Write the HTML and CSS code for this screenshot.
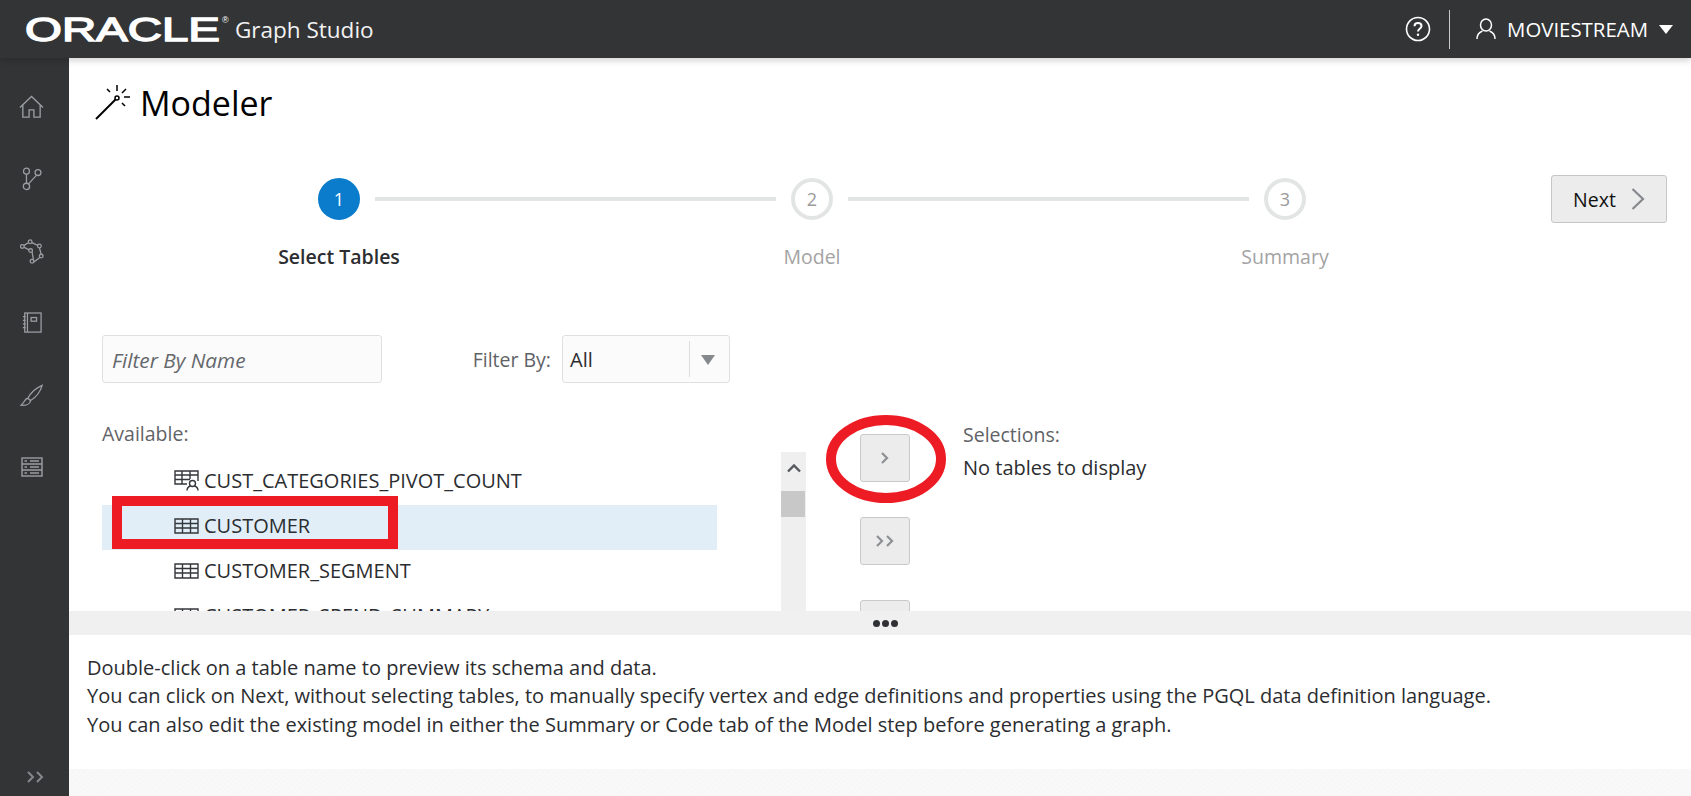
FILE: index.html
```html
<!DOCTYPE html>
<html lang="en">
<head>
  <meta charset="UTF-8" />
  <title>Graph Studio - Modeler</title>
  <link rel="stylesheet" href="styles.css">
</head>
<body>
  <header class="topbar">
    <div class="brand">
      <svg class="oracle-logo" width="206" height="40" viewBox="0 0 206 40">
        <text x="0" y="32" textLength="195" lengthAdjust="spacingAndGlyphs">ORACLE</text>
        <text class="reg" x="197" y="14">®</text>
      </svg>
      <span class="product">Graph Studio</span>
    </div>
    <div class="topbar-right">
      <svg class="help" width="26" height="26" viewBox="0 0 26 26" fill="none" stroke="#fff" stroke-width="1.6">
        <circle cx="13" cy="13" r="11.5"/>
        <path d="M9.5 10.2c0-2 1.6-3.2 3.5-3.2s3.5 1.2 3.5 3c0 2.700-3.500 2.800-3.500 5.400" stroke-width="2"/>
        <circle cx="13" cy="18.800" r="1.200" fill="#fff" stroke="none"/>
      </svg>
      <span class="divider"></span>
      <svg class="user" width="20" height="22" viewBox="0 0 20 22" fill="none" stroke="#fff" stroke-width="1.500">
        <ellipse cx="10" cy="7" rx="5.500" ry="6"/>
        <path d="M1 21c0-4.500 3-7 5.500-8M19 21c0-4.500-3-7-5.500-8"/>
      </svg>
      <span class="username">MOVIESTREAM</span>
      <span class="caret"></span>
    </div>
  </header>

  <div class="shell">
    <nav class="sidebar">
      <div class="nav-items">
        <svg width="25" height="24" viewBox="0 0 26 24" fill="none" stroke="#9a9ea3" stroke-width="1.400">
          <path d="M1 12.500 13 1l12 11.500M4 10v12.500h6.500V15h5v7.500H22V10"/>
        </svg>
        <svg width="24" height="24" viewBox="0 0 26 26" fill="none" stroke="#9a9ea3" stroke-width="1.400">
          <circle cx="7" cy="4.500" r="3.200"/><circle cx="19.500" cy="6" r="3.200"/><circle cx="7" cy="21" r="3.400"/>
          <path d="M7 7.700v9.900M9 18.500 18 8.800"/>
        </svg>
        <svg width="24" height="25" viewBox="0 0 26 26" fill="none" stroke="#9a9ea3" stroke-width="1.400">
          <path d="M2.500 7.500 11 2.500l9.500 4.500 3 11-8.500 6.500-2-11.500z"/>
          <g fill="#323436"><circle cx="2.500" cy="7.500" r="2"/><circle cx="11" cy="2.500" r="2"/><circle cx="21" cy="7" r="2"/><circle cx="23" cy="18" r="2"/><circle cx="13" cy="23.500" r="2"/><circle cx="11.500" cy="12" r="2"/></g>
        </svg>
        <svg width="20" height="22" viewBox="0 0 22 24" fill="none" stroke="#9a9ea3" stroke-width="1.400">
          <rect x="3" y="1" width="18" height="21"/>
          <rect x="10" y="6" width="6" height="4"/>
          <path d="M6 1v21M1 5h3M1 9h3M1 13h3M1 17h3"/>
        </svg>
        <svg width="24" height="23" viewBox="0 0 26 24" fill="none" stroke="#9a9ea3" stroke-width="1.400">
          <path d="M24 1C17 4 11 10 8.500 15l3 2.500C17 14 22 8 24 1zM8.500 15C5 15 5 20 1 22.500c5 .5 10-1 10.500-5"/>
        </svg>
        <svg width="22" height="20" viewBox="0 0 22 20" fill="none" stroke="#9a9ea3" stroke-width="1.400">
          <rect x="1" y="1" width="20" height="18"/>
          <path d="M1 7h20M1 13h20M9 4h9M9 10h9M9 16h9M3.500 4h2.500M3.500 10h2.500M3.500 16h2.500"/>
        </svg>
      </div>
      <svg class="expand" width="20" height="12" viewBox="0 0 20 12" fill="none" stroke="#85888c" stroke-width="2">
        <path d="M2 1l5 5-5 5M11 1l5 5-5 5"/>
      </svg>
    </nav>

    <main class="main">
      <section class="work">
        <div class="page-title">
          <svg width="36" height="36" viewBox="0 0 36 36" fill="none" stroke="#000" stroke-width="1.500">
            <path d="M1 35 20.500 15.500" stroke-width="2"/>
            <circle cx="22" cy="14" r="2"/>
            <path d="M22 7V1M15 8l-3-3M27 9l4-4M29 13h6M27 19l3 3"/>
          </svg>
          <h1>Modeler</h1>
        </div>

        <div class="wizard">
          <div class="step active">
            <span class="step-num">1</span>
            <span class="step-label">Select Tables</span>
          </div>
          <span class="step-line"></span>
          <div class="step">
            <span class="step-num">2</span>
            <span class="step-label">Model</span>
          </div>
          <span class="step-line"></span>
          <div class="step">
            <span class="step-num">3</span>
            <span class="step-label">Summary</span>
          </div>
          <button class="next-btn">Next
            <svg width="14" height="24" viewBox="0 0 14 24" fill="none" stroke="#85888c" stroke-width="2.200"><path d="M1.500 2 12 12 1.500 22"/></svg>
          </button>
        </div>

        <div class="filters">
          <div class="filter-input">Filter By Name</div>
          <label class="filter-label">Filter By:</label>
          <div class="filter-select">
            <span class="select-value">All</span>
            <span class="select-arrow"></span>
          </div>
        </div>

        <div class="shuttle">
          <div class="available">
            <div class="list-label">Available:</div>
            <div class="list-area">
              <ul class="table-list">
                <li>
                  <svg width="25" height="21" viewBox="0 0 25 21" fill="none" stroke="#33363a" stroke-width="1.400">
                    <path d="M13 14H1V1h23v10M1 5h23M1 9.500h15M8 1v13M16 1v8"/>
                    <circle cx="18.500" cy="13.500" r="3"/><path d="M13 20.500c0-3 2-4 3.500-4.500M24 20.500c0-3-2-4-3.500-4.500"/>
                  </svg>
                  CUST_CATEGORIES_PIVOT_COUNT
                </li>
                <li class="selected">
                  <svg width="25" height="16" viewBox="0 0 25 16" fill="none" stroke="#33363a" stroke-width="1.400">
                    <path d="M1 1h23v14H1zM1 5.500h23M1 10h23M8.500 1v14M16.500 1v14"/>
                  </svg>
                  CUSTOMER
                </li>
                <li>
                  <svg width="25" height="16" viewBox="0 0 25 16" fill="none" stroke="#33363a" stroke-width="1.400">
                    <path d="M1 1h23v14H1zM1 5.500h23M1 10h23M8.500 1v14M16.500 1v14"/>
                  </svg>
                  CUSTOMER_SEGMENT
                </li>
                <li>
                  <svg width="25" height="16" viewBox="0 0 25 16" fill="none" stroke="#33363a" stroke-width="1.400">
                    <path d="M1 1h23v14H1zM1 5.500h23M1 10h23M8.500 1v14M16.500 1v14"/>
                  </svg>
                  CUSTOMER_SPEND_SUMMARY
                </li>
              </ul>
              <div class="scrollbar">
                <svg width="16" height="10" viewBox="0 0 16 10" fill="none" stroke="#55585c" stroke-width="2.400"><path d="M2 8.500 8 2.500l6 6"/></svg>
                <span class="thumb"></span>
              </div>
            </div>
          </div>

          <div class="move-btns">
            <button class="move-btn"><svg width="10" height="14" viewBox="0 0 10 14" fill="none" stroke="#8d9094" stroke-width="2.200"><path d="M2 2l5 5-5 5"/></svg></button>
            <button class="move-btn"><svg width="20" height="14" viewBox="0 0 20 14" fill="none" stroke="#8d9094" stroke-width="2.200"><path d="M2 2l5 5-5 5M12 2l5 5-5 5"/></svg></button>
            <button class="move-btn"></button>
          </div>

          <div class="selections">
            <div class="list-label">Selections:</div>
            <div class="empty">No tables to display</div>
          </div>
        </div>

        <span class="mark-rect"></span>
        <svg class="mark-oval" width="120" height="88" viewBox="0 0 120 88" fill="none" stroke="#ed1c24" stroke-width="10">
          <ellipse cx="60" cy="44" rx="55" ry="39"/>
        </svg>
      </section>

      <div class="splitter"><span></span><span></span><span></span></div>

      <section class="info">
        <p>Double-click on a table name to preview its schema and data.</p>
        <p>You can click on Next, without selecting tables, to manually specify vertex and edge definitions and properties using the PGQL data definition language.</p>
        <p>You can also edit the existing model in either the Summary or Code tab of the Model step before generating a graph.</p>
      </section>

      <div class="page-foot"></div>
    </main>
  </div>
</body>
</html>
```
FILE: styles.css
```css
* {
  box-sizing: border-box;
}
html, body {
  height: 100%;
}
body {
  margin: 0;
  font-family: "Open Sans", "Noto Sans", sans-serif;
  font-size: 20px;
  color: #2b2d30;
  background: #fff;
  overflow: hidden;
}
.topbar {
  height: 58px;
  background: #323436;
  color: #fff;
  display: flex;
  align-items: center;
  justify-content: space-between;
  padding: 0 18px 0 25px;
  position: relative;
  z-index: 2;
  box-shadow: 0 3px 6px rgba(0,0,0,0.16);
}
.brand {
  display: flex;
  align-items: center;
  gap: 4px;
}
.oracle-logo text {
  fill: #fff;
  stroke: #fff;
  stroke-width: 1.4px;
  font-family: "Liberation Sans", sans-serif;
  font-size: 33px;
}
.oracle-logo .reg {
  font-size: 9px;
  stroke: none;
}
.product {
  font-size: 22.5px;
  color: #f2f2f2;
}
.topbar-right {
  display: flex;
  align-items: center;
}
.divider {
  width: 1px;
  height: 39px;
  background: #c9c9c9;
  margin: 0 26px 0 18px;
}
.username {
  margin-left: 11px;
  font-size: 20.4px;
}
.caret {
  margin-left: 11px;
  border-left: 7px solid transparent;
  border-right: 7px solid transparent;
  border-top: 9px solid #fff;
}
.shell {
  display: flex;
  height: 738px;
}
.sidebar {
  width: 69px;
  flex: none;
  background: #323436;
  display: flex;
  flex-direction: column;
  justify-content: space-between;
  padding: 13px 6px 13px 0;
}
.nav-items {
  display: grid;
  grid-auto-rows: 72px;
  justify-items: center;
  align-items: center;
}
.expand {
  margin-left: 26px;
}
.main {
  flex: 1;
  display: flex;
  flex-direction: column;
}
.work {
  height: 553px;
  overflow: hidden;
  position: relative;
  padding: 24px 24px 0 33px;
}
.page-title {
  display: flex;
  align-items: center;
  gap: 3px;
  margin-left: -7px;
}
.page-title svg {
  margin-top: -2px;
}
h1 {
  margin: 0 0 0 6px;
  font-size: 34px;
  font-weight: normal;
  line-height: 42px;
  color: #000;
}
.wizard {
  display: flex;
  align-items: flex-start;
  margin-top: 54px;
  padding-left: 216px;
}
.step {
  width: 42px;
  display: flex;
  flex-direction: column;
  align-items: center;
}
.step-num {
  width: 42px;
  height: 42px;
  flex: none;
  border-radius: 50%;
  border: 4px solid #e3e5e5;
  display: flex;
  align-items: center;
  justify-content: center;
  color: #9a9a9a;
  font-size: 18px;
}
.step.active .step-num {
  background: #0a7ccb;
  border-color: #0a7ccb;
  color: #fff;
}
.step-label {
  margin-top: 24px;
  line-height: 26px;
  font-size: 19.5px;
  white-space: nowrap;
  color: #a3a3a3;
}
.step.active .step-label {
  color: #2b2d30;
  font-weight: 600;
}
.step-line {
  width: 401px;
  height: 4px;
  margin: 19px 15px 0;
  background: #e3e5e5;
}
.next-btn {
  margin-left: auto;
  margin-top: -3px;
  width: 116px;
  height: 48px;
  background: #ececec;
  border: 1px solid #c6c6c6;
  border-radius: 3px;
  font: inherit;
  font-size: 19.5px;
  color: #111;
  display: flex;
  align-items: center;
  justify-content: center;
  gap: 15px;
}
.filters {
  display: flex;
  align-items: center;
  margin-top: 65px;
}
.filter-input {
  width: 280px;
  height: 48px;
  background: #fbfbfb;
  border: 1px solid #e0e0e0;
  border-radius: 3px;
  padding: 1px 9px 0;
  line-height: 46px;
  font-size: 20.8px;
  font-style: italic;
  color: #65686c;
}
.filter-label {
  width: 169px;
  text-align: right;
  font-size: 19.5px;
  color: #5f6266;
}
.filter-select {
  width: 168px;
  height: 48px;
  margin-left: 11px;
  background: #fbfbfb;
  border: 1px solid #e0e0e0;
  border-radius: 3px;
  display: flex;
  align-items: center;
  justify-content: space-between;
  padding-left: 7px;
  color: #2b2d30;
}
.select-arrow {
  width: 40px;
  height: 36px;
  border-left: 1px solid #dcdcdc;
  position: relative;
}
.select-arrow::after {
  content: "";
  position: absolute;
  left: 11px;
  top: 14px;
  border-left: 7px solid transparent;
  border-right: 7px solid transparent;
  border-top: 10px solid #85888c;
}
.shuttle {
  display: flex;
  margin-top: 37px;
  align-items: flex-start;
}
.available {
  width: 704px;
  flex: none;
}
.list-label {
  line-height: 28px;
  font-size: 19.5px;
  color: #5f6266;
}
.list-area {
  display: flex;
  justify-content: space-between;
  margin-top: 12px;
}
.table-list {
  width: 615px;
  margin: 0;
  padding: 0;
  list-style: none;
  color: #2b2d30;
}
.table-list li {
  height: 45px;
  display: flex;
  align-items: center;
  gap: 5px;
  padding: 0 0 4px 72px;
  white-space: nowrap;
}
.table-list li.selected {
  background: #e1eef7;
}
.scrollbar {
  width: 25px;
  height: 200px;
  margin-top: -8px;
  background: #efefef;
  padding-top: 11px;
  text-align: center;
}
.scrollbar svg {
  display: block;
  margin: 0 auto 18px;
}
.thumb {
  display: block;
  width: 24px;
  height: 26px;
  background: #c8c8c8;
}
.move-btns {
  display: flex;
  flex-direction: column;
  gap: 35px;
  margin: 14px 0 0 54px;
  width: 50px;
  flex: none;
}
.move-btn {
  width: 50px;
  height: 48px;
  padding: 0;
  background: #ececec;
  border: 1px solid #c9c9c9;
  border-radius: 3px;
  display: flex;
  align-items: center;
  justify-content: center;
}
.selections {
  margin: 1px 0 0 53px;
}
.empty {
  margin-top: 5px;
  line-height: 28px;
}
.mark-rect {
  position: absolute;
  left: 43px;
  top: 438px;
  width: 286px;
  height: 53px;
  border: 10px solid #ed1c24;
}
.mark-oval {
  position: absolute;
  left: 757px;
  top: 357px;
}
.splitter {
  height: 24px;
  background: #f0f0f0;
  display: flex;
  align-items: center;
  justify-content: center;
  gap: 2px;
  padding-left: 10px;
}
.splitter span {
  width: 7px;
  height: 7px;
  border-radius: 50%;
  background: #2f3134;
}
.info {
  height: 134px;
  padding: 19px 18px 0;
  line-height: 28.400px;
}
.info p {
  margin: 0;
}
.page-foot {
  flex: 1;
  background: repeating-linear-gradient(135deg, #f7f7f7 0 2px, #f9f9f9 2px 4px);
}
```
